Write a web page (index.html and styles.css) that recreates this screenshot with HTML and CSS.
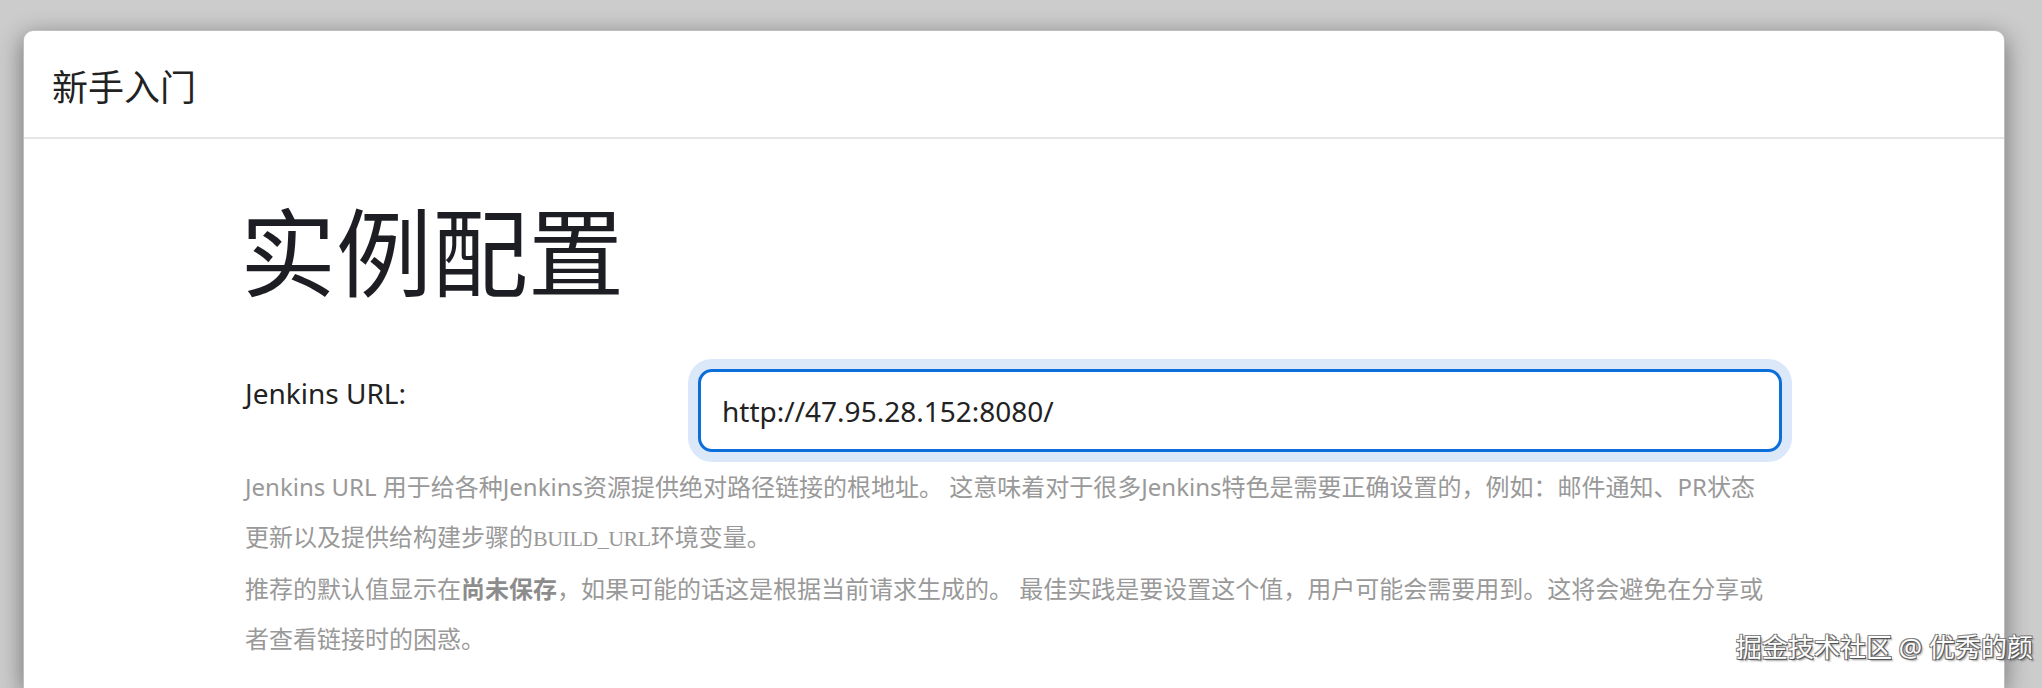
FILE: index.html
```html
<!DOCTYPE html>
<html lang="zh-CN">
<head>
<meta charset="utf-8">
<title>新手入门</title>
<link rel="stylesheet" href="styles.css">
</head>
<body>
<div class="modal">
  <div class="modal-header">
    <h4 class="modal-title">新手入门</h4>
  </div>
  <div class="modal-body">
    <h1 class="page-title">实例配置</h1>
    <div class="form-row">
      <label class="form-label" for="root-url">Jenkins URL:</label>
      <input class="form-input" id="root-url" type="text" value="http://47.95.28.152:8080/">
    </div>
    <div class="help">
      <p>Jenkins URL 用于给各种Jenkins资源提供绝对路径链接的根地址。 这意味着对于很多Jenkins特色是需要正确设置的，例如：邮件通知、PR状态更新以及提供给构建步骤的<code>BUILD_URL</code>环境变量。</p>
      <p>推荐的默认值显示在<strong>尚未保存</strong>，如果可能的话这是根据当前请求生成的。 最佳实践是要设置这个值，用户可能会需要用到。这将会避免在分享或者查看链接时的困惑。</p>
    </div>
  </div>
</div>
<div class="watermark">掘金技术社区 @ 优秀的颜</div>
</body>
</html>
```

FILE: styles.css
```css
* {
  box-sizing: border-box;
}

html, body {
  height: 688px;
}

body {
  margin: 0;
  overflow: hidden;
  background: #cccccc;
  font-family: "Noto Sans", "Noto Sans CJK SC", sans-serif;
  position: relative;
}

.modal {
  margin: 30px 0 0 23px;
  width: 1982px;
  height: 658px;
  background: #ffffff;
  border: 1px solid rgba(0, 0, 0, 0.25);
  border-bottom: none;
  border-radius: 10px 10px 0 0;
  box-shadow: 0 6px 24px rgba(0, 0, 0, 0.45);
}

.modal-header {
  padding: 30px 28px 22px;
  border-bottom: 2px solid #e5e5e5;
}

.modal-title {
  margin: 0;
  font-size: 36px;
  line-height: 54px;
  font-weight: 400;
  color: #222222;
}

.modal-body {
  padding: 0 222px 0 221px;
}

.page-title {
  margin: 55px 0 0 -5px;
  font-size: 96px;
  line-height: 116px;
  font-weight: 400;
  color: #1d1d24;
}

.form-row {
  display: grid;
  grid-template-columns: 453px 1fr;
  align-items: start;
  margin-top: 59px;
}

.form-label {
  padding-top: 3px;
  font-size: 28px;
  line-height: 42px;
  color: #222222;
}

.form-input {
  width: 100%;
  height: 83px;
  padding: 0 21px;
  border: 3px solid #0c6fd9;
  border-radius: 14px;
  box-shadow: 0 0 0 10px #dbe8fa;
  outline: none;
  font-family: "Noto Sans", "Noto Sans CJK SC", sans-serif;
  font-size: 28px;
  color: #222222;
  background: #ffffff;
}

.help {
  margin-top: 10px;
  width: 1525px;
  font-size: 24px;
  line-height: 50px;
  color: #999999;
}

.help p {
  margin: 0;
}

.help code {
  font-family: "Liberation Serif", serif;
  font-size: 22px;
  letter-spacing: -0.5px;
}

.help strong {
  font-weight: 700;
  color: #8c8c8c;
}

.watermark {
  position: absolute;
  left: 1736px;
  top: 629px;
  font-size: 26px;
  line-height: 36px;
  color: #ffffff;
  white-space: nowrap;
  text-shadow: 1px 1px 0 #555555, -1px -1px 0 #888888, 1px -1px 0 #777777, -1px 1px 0 #777777, 2px 2px 2px rgba(0, 0, 0, 0.4);
}
```
